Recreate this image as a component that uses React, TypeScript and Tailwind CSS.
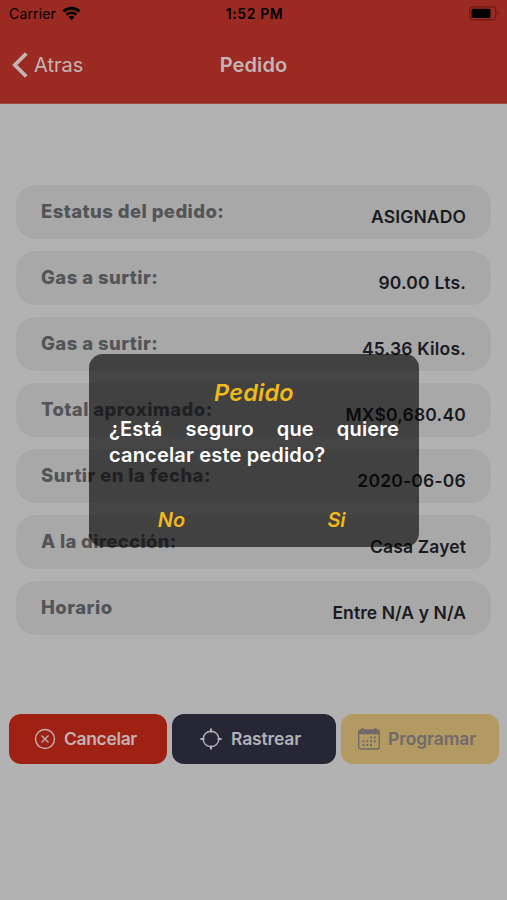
type RowProps = { label: string; value: string; labelSpacing: string; valueSpacing: string };

const rows: RowProps[] = [
  { label: "Estatus del pedido:", value: "ASIGNADO", labelSpacing: "tracking-[0.42px]", valueSpacing: "tracking-[0.12px]" },
  { label: "Gas a surtir:", value: "90.00 Lts.", labelSpacing: "tracking-[0.44px]", valueSpacing: "tracking-[0.2px]" },
  { label: "Gas a surtir:", value: "45.36 Kilos.", labelSpacing: "tracking-[0.44px]", valueSpacing: "tracking-[0.2px]" },
  { label: "Total aproximado:", value: "MX$0,680.40", labelSpacing: "tracking-[0.39px]", valueSpacing: "tracking-[0.2px]" },
  { label: "Surtir en la fecha:", value: "2020-06-06", labelSpacing: "tracking-[0.42px]", valueSpacing: "tracking-[0.2px]" },
  { label: "A la dirección:", value: "Casa Zayet", labelSpacing: "tracking-[0.32px]", valueSpacing: "tracking-[0.12px]" },
  { label: "Horario", value: "Entre N/A y N/A", labelSpacing: "tracking-[0.5px]", valueSpacing: "tracking-[0.08px]" },
];

function StatusBar() {
  return (
    <div className="grid h-[27px] grid-cols-3 items-center pl-[9px] pr-[7px] text-black">
      <div className="flex items-center gap-[6px]">
        <span className="text-[14px] leading-none tracking-[0.15px]">Carrier</span>
        <svg width="19" height="15" viewBox="0 0 19 15" fill="none">
          <path d="M1.6 5.5a11.2 11.2 0 0 1 15.8 0" stroke="currentColor" strokeWidth="2.8" />
          <path d="M4.6 8.7a7 7 0 0 1 9.8 0" stroke="currentColor" strokeWidth="2.5" />
          <path d="M9.5 14.2l-3-3.1a4.3 4.3 0 0 1 6 0z" fill="currentColor" />
        </svg>
      </div>
      <span className="whitespace-nowrap text-center text-[14px] font-semibold leading-none tracking-[0.6px]">1:52 PM</span>
      <svg className="justify-self-end" width="31" height="15" viewBox="0 0 31 15">
        <rect x="0.7" y="0.8" width="26" height="13" rx="3.5" fill="none" stroke="#701a15" strokeWidth="1.2" />
        <rect x="2.5" y="2.7" width="19" height="9.2" rx="1.5" fill="#000" />
        <path d="M28.3 5.2v4.2c1.7-.5 1.7-3.7 0-4.2z" fill="#701a15" />
      </svg>
    </div>
  );
}

function Header() {
  return (
    <header className="h-[104px] border-b border-[#9d4b47] bg-[#9b2a23]">
      <StatusBar />
      <div className="grid h-[75px] grid-cols-3 items-center pl-[12px] pr-[12px] text-[#c4b5b4]">
        <div className="flex items-center gap-[6px]">
          <svg width="16" height="26" viewBox="0 0 16 26" fill="none">
            <path d="M14.3 1.5L2.8 13l11.5 11.5" stroke="currentColor" strokeWidth="3.8" />
          </svg>
          <span className="pt-px text-[20px] leading-none">Atras</span>
        </div>
        <h1 className="text-center text-[20px] font-semibold leading-none tracking-[0.1px]">Pedido</h1>
      </div>
    </header>
  );
}

function Row({ label, value, labelSpacing, valueSpacing }: RowProps) {
  return (
    <li className="flex h-[54px] justify-between rounded-[20px] bg-[#a8a8a8] px-[25px]">
      <span className={`whitespace-nowrap pt-[13px] text-[18.5px] font-extrabold leading-[26px] text-[#535458] ${labelSpacing}`}>
        {label}
      </span>
      <span className={`whitespace-nowrap pt-[19px] text-[17.5px] font-semibold leading-[26px] text-[#1a1a22] ${valueSpacing}`}>
        {value}
      </span>
    </li>
  );
}

function CancelIcon() {
  return (
    <svg width="22" height="22" viewBox="0 0 22 22" fill="none" stroke="currentColor" strokeWidth="1.4">
      <circle cx="11" cy="11" r="9.5" />
      <path d="M7.5 7.5l7 7M14.5 7.5l-7 7" />
    </svg>
  );
}

function TrackIcon() {
  return (
    <svg width="22" height="22" viewBox="0 0 22 22" fill="none" stroke="currentColor">
      <circle cx="11" cy="11" r="7.8" strokeWidth="1.4" />
      <path d="M11 .4v4M11 17.6v4M.4 11h4M17.6 11h4" strokeWidth="2" />
    </svg>
  );
}

function CalendarIcon() {
  return (
    <svg width="22" height="22" viewBox="0 0 22 22" fill="none">
      <rect x="0.7" y="2" width="20.6" height="19" rx="2" stroke="currentColor" strokeWidth="1.3" />
      <path d="M.7 6.3V4q0-2 2-2h16.6q2 0 2 2v2.3z" fill="currentColor" />
      <path d="M4.5 0v3M17.5 0v3" stroke="currentColor" strokeWidth="2" />
      <path
        d="M12 9.5h2M15.8 9.5h2M4.4 13.3h2M8.2 13.3h2M12 13.3h2M15.8 13.3h2M4.4 17.1h2M8.2 17.1h2M12 17.1h2"
        stroke="currentColor"
        strokeWidth="2"
      />
    </svg>
  );
}

function Dialog() {
  return (
    <div className="absolute left-[89px] top-[354px] h-[193px] w-[330px] rounded-[14px] bg-black/61 px-[20px] pt-[24px]">
      <h2 className="text-center text-[23.5px] font-semibold italic leading-[30px] tracking-[0.2px] text-[#f0b91c]">Pedido</h2>
      <p className="mt-[8px] text-justify text-[20px] font-semibold leading-[26px] tracking-[0.17px] text-white">
        ¿Está seguro que quiere cancelar este pedido?
      </p>
      <div className="mt-[39px] grid grid-cols-2 text-center text-[20px] font-semibold italic leading-[26px] text-[#f0b91c]">
        <button className="-ml-[20px]">No</button>
        <button className="-mr-[20px]">Si</button>
      </div>
    </div>
  );
}

function App() {
  return (
    <div className="relative h-[900px] w-[507px] overflow-hidden bg-[#b2b2b2] font-['Inter','Liberation_Sans',sans-serif]">
      <Header />
      <ul className="flex flex-col gap-[12px] pl-[16px] pr-[16px] pt-[81px]">
        {rows.map((row, i) => (
          <Row key={i} {...row} />
        ))}
      </ul>
      <div className="mt-[79px] flex gap-[5px] pl-[9px] text-[17.5px] font-semibold">
        <button className="flex h-[50px] w-[158px] items-center gap-[8px] rounded-[12px] bg-[#9f2114] pl-[25px] tracking-[-0.35px] text-[#c0b3b2]">
          <CancelIcon />
          Cancelar
        </button>
        <button className="flex h-[50px] w-[164px] items-center gap-[9px] rounded-[12px] bg-[#272635] pl-[28px] tracking-[-0.15px] text-[#b2b2b6]">
          <TrackIcon />
          Rastrear
        </button>
        <button className="flex h-[50px] w-[158px] items-center gap-[8px] rounded-[12px] bg-[#b39a63] pl-[17px] tracking-[-0.1px] text-[#716969]">
          <CalendarIcon />
          Programar
        </button>
      </div>
      <Dialog />
    </div>
  );
}

export default App;
